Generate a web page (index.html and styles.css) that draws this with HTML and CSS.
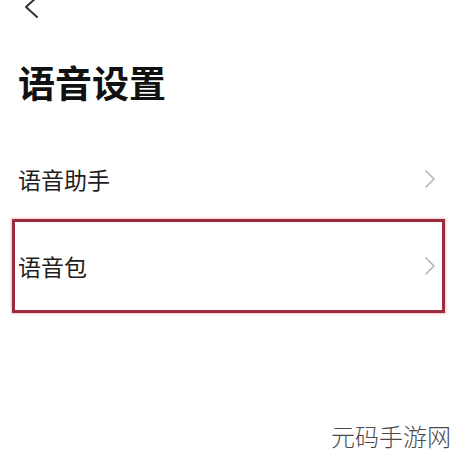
FILE: index.html
```html
<!DOCTYPE html>
<html lang="zh-CN">
<head>
<meta charset="utf-8">
<link rel="stylesheet" href="styles.css">
</head>
<body>
<div class="page">
  <div class="topbar">
    <svg class="back" width="20" height="24" viewBox="0 0 20 24"><polyline points="17,3 6,13 17,23" fill="none" stroke="#333" stroke-width="2" stroke-linecap="round" stroke-linejoin="round"/></svg>
  </div>
  <h1 class="title">语音设置</h1>
  <div class="list">
    <div class="row row-plain">
      <span class="label">语音助手</span>
      <svg class="chev" width="12" height="20" viewBox="0 0 12 20"><polyline points="2,2 10,10 2,18" fill="none" stroke="#b3b3b3" stroke-width="1.6" stroke-linecap="round" stroke-linejoin="round"/></svg>
    </div>
    <div class="highlight">
      <div class="row row-boxed">
        <span class="label">语音包</span>
        <svg class="chev" width="12" height="20" viewBox="0 0 12 20"><polyline points="2,2 10,10 2,18" fill="none" stroke="#b3b3b3" stroke-width="1.6" stroke-linecap="round" stroke-linejoin="round"/></svg>
      </div>
    </div>
  </div>
  <div class="watermark">元码手游网</div>
</div>
</body>
</html>
```
FILE: styles.css
```css
html, body {
  margin: 0;
  padding: 0;
  background: #ffffff;
}
body {
  font-family: "Noto Sans CJK SC", "Noto Sans", sans-serif;
  color: #1e1e1e;
  width: 455px;
  height: 462px;
  overflow: hidden;
}
.page {
  position: relative;
  height: 462px;
}
.topbar {
  height: 20px;
  margin-top: -6px;
  padding-left: 20px;
  display: flex;
  align-items: flex-start;
}
.back {
  display: block;
}
.title {
  margin: 0;
  padding: 50px 0 0 18px;
  font-size: 37px;
  line-height: 37px;
  font-weight: 700;
  color: #111;
}
.list {
  margin-top: 38px;
}
.row {
  display: flex;
  align-items: center;
  justify-content: space-between;
}
.row-plain {
  height: 80px;
  padding: 0 19px 0 18px;
}
.highlight {
  margin: 0 10px 0 12px;
  border: 3px solid #9b2c3c;
  box-shadow: 0 0 2px 1px rgba(230, 120, 140, 0.45);
}
.row-boxed {
  height: 88px;
  padding: 0 6px 0 3px;
}
.label {
  font-size: 23px;
  line-height: 23px;
  color: #1e1e1e;
}
.chev {
  display: block;
}
.watermark {
  position: absolute;
  left: 331px;
  top: 427px;
  font-size: 24px;
  line-height: 30px;
  font-weight: 300;
  color: #4a4a4a;
  white-space: nowrap;
}
```
